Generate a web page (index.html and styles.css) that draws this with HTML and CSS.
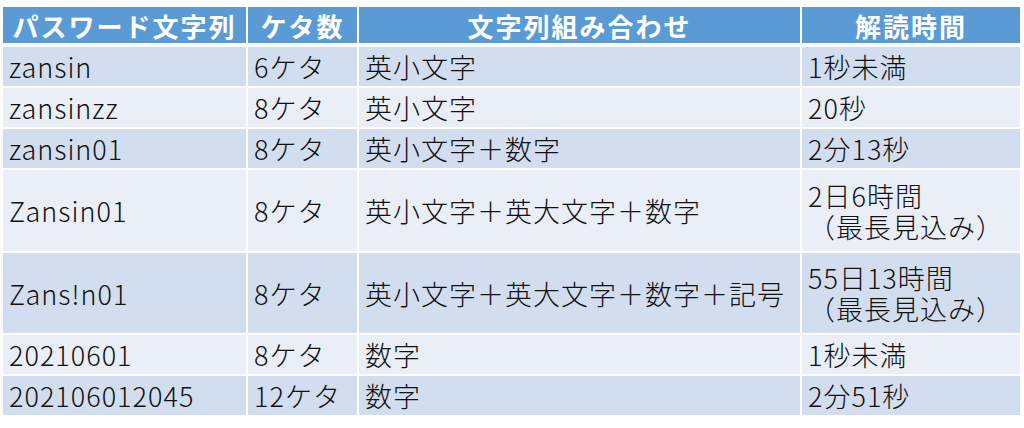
FILE: index.html
```html
<!DOCTYPE html>
<html lang="ja">
<head>
<meta charset="utf-8">
<title>パスワード解読時間</title>
<link rel="stylesheet" href="styles.css">
</head>
<body>
<table class="pw-table">
  <colgroup>
    <col class="c1"><col class="c2"><col class="c3"><col class="c4">
  </colgroup>
  <thead>
    <tr class="head">
      <th>パスワード文字列</th>
      <th>ケタ数</th>
      <th>文字列組み合わせ</th>
      <th>解読時間</th>
    </tr>
  </thead>
  <tbody>
    <tr class="band-a"><td>zansin</td><td>6ケタ</td><td>英小文字</td><td>1秒未満</td></tr>
    <tr class="band-b"><td>zansinzz</td><td>8ケタ</td><td>英小文字</td><td>20秒</td></tr>
    <tr class="band-a"><td>zansin01</td><td>8ケタ</td><td>英小文字＋数字</td><td>2分13秒</td></tr>
    <tr class="band-b tall"><td>Zansin01</td><td>8ケタ</td><td>英小文字＋英大文字＋数字</td><td class="two"><span class="ln">2日6時間</span><span class="ln">（最長見込み）</span></td></tr>
    <tr class="band-a tall2"><td>Zans!n01</td><td>8ケタ</td><td>英小文字＋英大文字＋数字＋記号</td><td class="two"><span class="ln">55日13時間</span><span class="ln">（最長見込み）</span></td></tr>
    <tr class="band-b"><td>20210601</td><td>8ケタ</td><td>数字</td><td>1秒未満</td></tr>
    <tr class="band-a"><td>202106012045</td><td>12ケタ</td><td>数字</td><td>2分51秒</td></tr>
  </tbody>
</table>
</body>
</html>
```
FILE: styles.css
```css
html, body {
  margin: 0;
  padding: 0;
  background: #ffffff;
}
body {
  padding: 5px 0 0 1px;
  font-family: "Noto Sans CJK JP", "Noto Sans", sans-serif;
}
.pw-table {
  border-collapse: separate;
  border-spacing: 2px;
  table-layout: fixed;
  width: 1021px;
}
.c1 { width: 243px; }
.c2 { width: 109px; }
.c3 { width: 441px; }
.c4 { width: 218px; }

.pw-table th,
.pw-table td {
  padding: 0 0 0 6px;
  font-size: 27px;
  font-weight: 300;
  letter-spacing: 1px;
  line-height: 31px;
  white-space: nowrap;
  vertical-align: middle;
  text-align: left;
  color: #111111;
}
.pw-table th {
  height: 36px;
  padding: 0;
  font-size: 26px;
  text-align: center;
  color: #ffffff;
  font-weight: 700;
  background: #5b9bd5;
  background-clip: padding-box;
  border-bottom: 2px solid #ffffff;
  letter-spacing: 2px;
}
.pw-table td { height: 39px; }
.tall td { height: 81px; }
.tall2 td { height: 80px; }
.band-a td { background: #d2deef; }
.band-b td { background: #e9eef7; }
.two .ln {
  display: block;
  height: 31px;
  line-height: 31px;
}
```
